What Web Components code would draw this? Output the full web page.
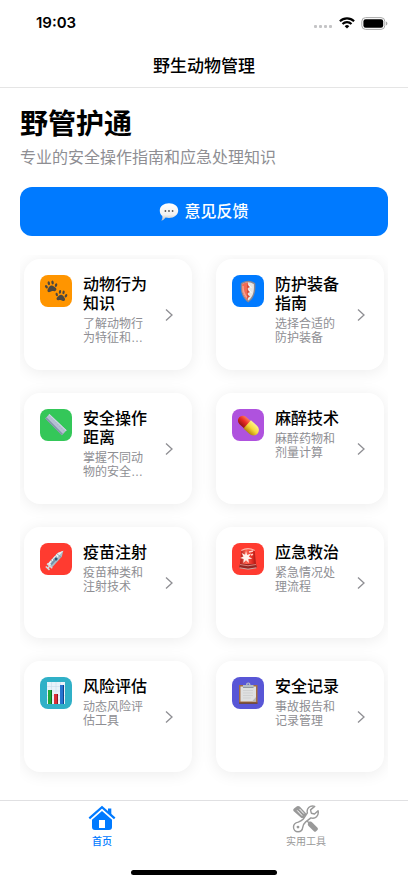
<!DOCTYPE html>
<html lang="zh-CN">
<head>
<meta charset="utf-8">
<meta name="viewport" content="width=device-width, initial-scale=1">
<title>野生动物管理</title>
<style>
html, body { margin: 0; background: #fff; }
body { font-family: "Liberation Sans", "Noto Sans CJK SC", sans-serif; color: #000; }
</style>
</head>
<body>
<wildlife-app></wildlife-app>

<template id="t-status">
<style>
:host { display: flex; justify-content: space-between; align-items: center; height: 46px; padding: 0 20px 0 36px; }
time { font: 600 15px/20px Inter, sans-serif; }
.right { display: flex; align-items: center; gap: 6px; }
svg { display: block; }
</style>
<time>19:03</time>
<div class="right">
<svg width="20" height="14" viewBox="0 0 20 14" fill="#c4c4c6"><rect x="1" y="9" width="3" height="3" rx="1"/><rect x="6" y="9" width="3" height="3" rx="1"/><rect x="11" y="9" width="3" height="3" rx="1"/><rect x="16" y="9" width="3" height="3" rx="1"/></svg>
<svg width="16" height="12" viewBox="0 0 16 12" fill="none" stroke="#000" stroke-width="2.1"><path d="M.9 4.3a10.2 10.2 0 0 1 14.2 0M3.5 7a6.4 6.4 0 0 1 9 0"/><path d="M8 11.6 5.7 9.2a3.3 3.3 0 0 1 4.6 0Z" fill="#000" stroke="none"/></svg>
<svg width="27" height="13" viewBox="0 0 27 13"><rect x=".8" y=".6" width="23" height="11.8" rx="3.8" fill="none" stroke="#a9a9a9"/><rect x="2.4" y="2.2" width="19.8" height="8.6" rx="2.2"/><path d="M25 4.5v4q1.4-.5 1.4-2t-1.4-2Z" fill="#a9a9a9"/></svg>
</div>
</template>

<template id="t-nav">
<style>
:host { display: block; border-bottom: 1px solid #e5e5e5; padding: 10px 16px 9px; }
h1 { margin: 0; font-size: 17px; line-height: 22px; font-weight: 500; text-align: center; }
</style>
<h1><slot></slot></h1>
</template>

<template id="t-hero">
<style>
:host { display: block; }
h2 { margin: 0; font-size: 28px; line-height: 34px; font-weight: 700; }
p { margin: 6px 0 0; font-size: 16px; line-height: 20px; color: #8e8e93; }
</style>
<h2><slot name="title"></slot></h2>
<p><slot></slot></p>
</template>

<template id="t-feedback">
<style>
:host { display: block; }
button { display: flex; align-items: center; justify-content: center; gap: 5px; width: 100%; height: 49px; border: 0; border-radius: 12px; background: #007aff; color: #fff; font: inherit; font-size: 16px; font-weight: 500; line-height: 20px; cursor: pointer; padding: 0; }
svg { display: block; }
</style>
<button type="button">
<svg width="20" height="20" viewBox="0 0 20 20" aria-hidden="true"><defs><linearGradient id="g" x2="0" y2="1"><stop stop-color="#fff"/><stop offset=".65" stop-color="#f1f1f1"/><stop offset="1" stop-color="#bbb"/></linearGradient></defs><path d="M10 1.2c5.2 0 9.2 3 9.2 7.3s-4 7.5-9.2 7.5q-1.8 0-3.4-.4-1.700 2.600-4.300 3.200c1-1.500 1.300-3 1-4.700C1.600 12.700 .8 10.800 .8 8.500 .8 4.200 4.800 1.200 10 1.200Z" fill="url(#g)"/><circle cx="6.4" cy="9" r=".9" fill="#555"/><circle cx="10" cy="9" r=".9" fill="#555"/><circle cx="13.6" cy="9" r=".9" fill="#555"/></svg>
<slot></slot>
</button>
</template>

<template id="t-card">
<style>
:host { display: grid; }
a { box-sizing: border-box; min-height: 111px; padding: 16px; display: flex; gap: 11px; border-radius: 16px; background: #fff; box-shadow: 0 2px 16px rgba(0,0,0,.08); color: inherit; text-decoration: none; }
.icon { flex: none; width: 32px; height: 32px; border-radius: 8px; background: var(--tint); }
::slotted(svg) { display: block; width: 32px; height: 32px; }
.text { flex: 1; min-width: 0; }
h3 { margin: 0; font-size: 16px; line-height: 19px; font-weight: 500; }
p { margin: 4px 0 0; font-size: 12px; line-height: 14px; color: #8e8e93; }
.arrow { flex: none; align-self: center; display: block; width: 16px; height: 16px; }
</style>
<a href="#">
<span class="icon"><slot name="icon"></slot></span>
<div class="text"><h3><slot name="title"></slot></h3><p><slot></slot></p></div>
<svg class="arrow" viewBox="0 0 16 16" fill="none" stroke="#8e8e93" stroke-width="1.3" aria-hidden="true"><path d="m6 2.500 6 5.500-6 5.500"/></svg>
</a>
</template>

<template id="t-tabs">
<style>
:host { display: block; border-top: 1px solid #e0e0e2; background: #fff; }
nav { display: flex; padding-top: 4px; height: 65px; }
.home { width: 146px; height: 5px; border-radius: 3px; background: #000; margin: 0 auto 8px; }
</style>
<nav><slot></slot></nav>
<div class="home"></div>
</template>

<template id="t-tab">
<style>
:host { flex: 1; color: #999; }
:host([active]) { color: #007aff; }
a { display: flex; flex-direction: column; align-items: center; gap: 2px; color: inherit; text-decoration: none; font-size: 10px; line-height: 14px; }
:host([active]) a { font-weight: 500; }
::slotted(svg) { display: block; width: 28px; height: 28px; }
</style>
<a href="#"><slot name="icon"></slot><span><slot></slot></span></a>
</template>

<template id="t-app">
<style>
:host { display: flex; flex-direction: column; min-height: 100vh; }
main { flex: 1; padding: 20px 20px 0; }
feedback-button { margin-top: 19px; }
.grid { display: grid; grid-template-columns: 1fr 1fr; gap: 23px 24px; margin-top: 19px; padding: 4px 4px 20px; overflow: hidden; }
</style>
<status-bar></status-bar>
<nav-bar>野生动物管理</nav-bar>
<main>
<page-hero><span slot="title">野管护通</span>专业的安全操作指南和应急处理知识</page-hero>
<feedback-button>意见反馈</feedback-button>
<div class="grid">
<feature-card style="--tint:#ff9500"><svg slot="icon" viewBox="0 0 32 32" fill="#4b4741"><defs><g id="paw"><path d="M0-.8c1.900 0 2.500 1.500 3.800 2.800C5.200 3.400 4.500 5.600 2.600 5.400 1.500 5.300.9 4.800 0 4.800s-1.500.5-2.600.6c-1.900.2-2.600-2-1.200-3.400C-2.500.7-1.900-.8 0-.8Z"/><ellipse cx="-4.900" cy="-.4" rx="1.200" ry="1.900" transform="rotate(-24 -4.900 -.4)"/><ellipse cx="-1.900" cy="-3.500" rx="1.200" ry="2"/><ellipse cx="1.900" cy="-3.500" rx="1.200" ry="2"/><ellipse cx="4.900" cy="-.4" rx="1.200" ry="1.900" transform="rotate(24 4.900 -.4)"/></g></defs><use href="#paw" transform="translate(11.300 11.300) rotate(-10)"/><use href="#paw" transform="translate(21.300 20.500) rotate(8) scale(.95)"/></svg><span slot="title">动物行为知识</span>了解动物行为特征和…</feature-card>

<feature-card style="--tint:#007aff"><svg slot="icon" viewBox="0 0 32 32"><defs><clipPath id="sh"><path d="M16.200 7.200c2 .2 4 .8 5.600 1.900.7 6.800-.8 13-5.600 16.400C11.400 22.100 9.400 15.900 10.200 9.100c1.700-1.100 4-1.700 6-1.900Z"/></clipPath></defs><path d="M16.200 5.700c2.600.3 5 1 7 2.500.9 8-1 15.300-7 19.200C10.200 23.500 8 16.200 8.900 8.200c2-1.500 4.700-2.200 7.300-2.500Z" fill="#8c8790"/><g clip-path="url(#sh)"><path fill="#e7e5e3" d="M8 5h16v24H8z"/><path fill="#f06c55" d="M8 5h8v24H8z"/><path fill="#d84b39" d="m15 9 3 3-3 1.500zm0 5 3 3-3 1.500zm0 5 3 2.500-3 2z"/><path d="m17 10 2.400 3M17 15l2.400 3" stroke="#fff"/><path d="M11 11q-.2 7 4 11.500" stroke="#f7a08f" fill="none" stroke-width="1.500"/></g></svg><span slot="title">防护装备指南</span>选择合适的防护装备</feature-card>

<feature-card style="--tint:#34c759"><svg slot="icon" viewBox="0 0 32 32"><path d="m9.400 5 17.200 16.200-4.700 5.100L5.300 9.400Z" fill="#b4bfd2"/><path d="m5.300 9.400 16.600 16.900 1.200-1.400L6.500 8.200Z" fill="#8495aa"/><path d="m9.400 5 17.200 16.200-.7.800L8.700 5.700Z" fill="#cdd7e3"/><path d="m10.300 7.400-1 1.100m3 .8-1 1.100m3 .8-1 1.100m3 .8-1 1.100m3 .8-1 1.100m3 .8-1 1.100m3 .8-1 1.100m3 .8-1 1.100" stroke="#9eabbd" stroke-width=".5"/></svg><span slot="title">安全操作距离</span>掌握不同动物的安全…</feature-card>

<feature-card style="--tint:#af52de"><svg slot="icon" viewBox="0 0 32 32"><defs><linearGradient id="red" x2="0" y2="1"><stop stop-color="#ff7b55"/><stop offset=".45" stop-color="#e92b25"/><stop offset="1" stop-color="#951611"/></linearGradient><linearGradient id="yel" x2="0" y2="1"><stop stop-color="#fff18b"/><stop offset=".5" stop-color="#f5d83a"/><stop offset="1" stop-color="#b78408"/></linearGradient></defs><g transform="rotate(42 16 16)"><path d="M16 11.300H9.200a4.900 4.900 0 0 0 0 9.800H16Z" fill="url(#red)"/><path d="M15 10.500h8.200a5.600 5.600 0 0 1 0 11.200H15Z" fill="url(#yel)"/></g></svg><span slot="title">麻醉技术</span>麻醉药物和剂量计算</feature-card>

<feature-card style="--tint:#ff3b30"><svg slot="icon" viewBox="0 0 32 32"><g transform="translate(-1 1) rotate(-48 16 16)"><path d="M8 13.200h15l5.500 2.800-5.500 2.800H8Z" fill="#a9bdc8"/><path d="M8 13.200h15l5.500 2.800H8Z" fill="#edf1f2"/><path d="M10 15h6v2h-6z" fill="#7192a8"/><circle cx="17.500" cy="16" r="1.600" fill="#275777"/><path d="M22 13.200v5.600M13 13.200v2M15.500 13.200v2M19.500 13.200v2" stroke="#617a88" stroke-width=".6"/><path d="M8 12.500v7M5 16h3M5 13.500v5" stroke="#d4d9dc" stroke-width="1.500"/></g></svg><span slot="title">疫苗注射</span>疫苗种类和注射技术</feature-card>

<feature-card style="--tint:#ff3b30"><svg slot="icon" viewBox="0 0 32 32"><defs><linearGradient id="lamp"><stop stop-color="#a91c18"/><stop offset=".4" stop-color="#ff6552"/><stop offset=".75" stop-color="#e32e24"/><stop offset="1" stop-color="#a51813"/></linearGradient></defs><path d="M9.300 7.500Q16 3.500 22.700 7.500L24 22H8Z" fill="url(#lamp)"/><path d="M9.300 7.500Q16 3.800 22.700 7.500" fill="none" stroke="#ffb4a8" stroke-width="1.200"/><path d="m14 8 1.100 4 4-1.500-2.300 3.300 3.500 1.900-4 .4.600 3.900-2.900-2.700-2.700 2.700.4-3.900-3.600-1 3.400-1.700-1.900-3.400 3.500 1.700Z" fill="#fff1eb"/><path d="m17 9 4-1M19 12l2-.7" stroke="#ffd5cc" stroke-width="1.500"/><path d="M8 21h16l1 3.500q-9 3.500-18 0Z" fill="#962622"/><path d="M8 21.500q8 2.500 16 0" fill="none" stroke="#d98078"/><path d="M7.600 24.800q8.400 2.800 16.800 0" fill="none" stroke="#c7aaa6"/></svg><span slot="title">应急救治</span>紧急情况处理流程</feature-card>

<feature-card style="--tint:#30b0c7"><svg slot="icon" viewBox="0 0 32 32"><path d="M7 5h18v22H7z" fill="#e9f2fa"/><path d="M7 9.500h18M7 14h18M7 18.500h18M7 23h18M11.500 5v22M16 5v22M20.500 5v22" stroke="#c7d9e8" stroke-width=".5"/><path d="M8 13h4v14H8z" fill="#20a83a"/><path d="M11 13h1v14h-1z" fill="#087523"/><path d="M14 17h4v10h-4z" fill="#d92e35"/><path d="M17 17h1v10h-1z" fill="#911521"/><path d="M20 8h4v19h-4z" fill="#2673cf"/><path d="M23 8h1v19h-1z" fill="#123f8b"/></svg><span slot="title">风险评估</span>动态风险评估工具</feature-card>

<feature-card style="--tint:#5856d6"><svg slot="icon" viewBox="0 0 32 32"><path d="M7 8h18.500v18.500H7z" fill="#a56e42"/><path d="M7 25.500h18.500v1.200H7z" fill="#67412b"/><path d="M8.500 9.500h15.500v15H8.500z" fill="#dfe0e0"/><path d="M20 24.500h4V20Z" fill="#b9b9b9"/><path d="M11 13.500h10M11 16h10M11 18.500h10M11 21h8" stroke="#cacaca" stroke-width=".7"/><path d="M11 10.500V8h3c.2-3.200 4.300-3.200 4.500 0h3v2.500Z" fill="#b6bec5"/><path d="M11 10.500h10.500" stroke="#777f87" stroke-width=".7"/><circle cx="16.200" cy="7.300" r=".8" fill="#5856d6"/></svg><span slot="title">安全记录</span>事故报告和记录管理</feature-card>
</div>
</main>
<tab-bar>
<tab-item active><svg slot="icon" viewBox="0 0 28 28" aria-hidden="true"><path d="M1.300 13.300 14 2.200l12.700 11.100" fill="none" stroke="#007aff" stroke-width="2.200"/><path d="M20 3.500h3.300V10L20 7.200Z" fill="#007aff"/><path fill-rule="evenodd" d="M14 6 24 14.800V22q0 3-3 3H7q-3 0-3-3v-7.200ZM11 15v8h6v-8Z" fill="#007aff"/></svg>首页</tab-item>
<tab-item><svg slot="icon" viewBox="0 0 28 28" aria-hidden="true"><path d="m2 3.500 3-2.300q1.500-.8 2.700.4l6.100 6.500q1 1.300 0 2.400l-2.600 2.300q-1.300.9-2.400-.3L1.500 6q-1-1.400.5-2.500Z" fill="#999"/><path d="m5.200 5.400 5 5.300M7.500 3.900l4.400 4.700" stroke="#fff" stroke-width="1"/><path d="m11 10.500 5.800 6.300c2-.6 3.200.3 4 1.300l4.700 4.700q.8.900.2 1.900l-1.800 1.800q-1 .7-2-.2L17 21.500c-1-1-1.600-2-.9-3.600L10 11.500Z" fill="#999"/><path d="M22.700 1.400c-5-1.400-8.500 2.400-7.300 6.500L11.300 14c-1.200 1.400-2.800 2.300-5 3.100-2.500.5-4.800 2-4.800 5 0 2.700 2 4.700 4.500 4.700 3 0 4.500-2.200 4.800-4.600.5-2.400 1.400-4 2.900-5.300l5.200-4c4.400 1.400 8.300-2.300 7.200-7.100L22.500 9l-3.200-.8-.8-3.300Z" fill="#fff" stroke="#999" stroke-width="1.400" stroke-linejoin="round"/><circle cx="6" cy="22.100" r="1.400" fill="#999"/></svg>实用工具</tab-item>
</tab-bar>
</template>

<script>
const define = (name, templateId) => customElements.define(name, class extends HTMLElement {
  constructor() {
    super();
    this.attachShadow({ mode: "open" }).append(document.getElementById(templateId).content.cloneNode(true));
  }
});
define("status-bar", "t-status");
define("nav-bar", "t-nav");
define("page-hero", "t-hero");
define("feedback-button", "t-feedback");
define("feature-card", "t-card");
define("tab-item", "t-tab");
define("tab-bar", "t-tabs");
define("wildlife-app", "t-app");
</script>
</body>
</html>
